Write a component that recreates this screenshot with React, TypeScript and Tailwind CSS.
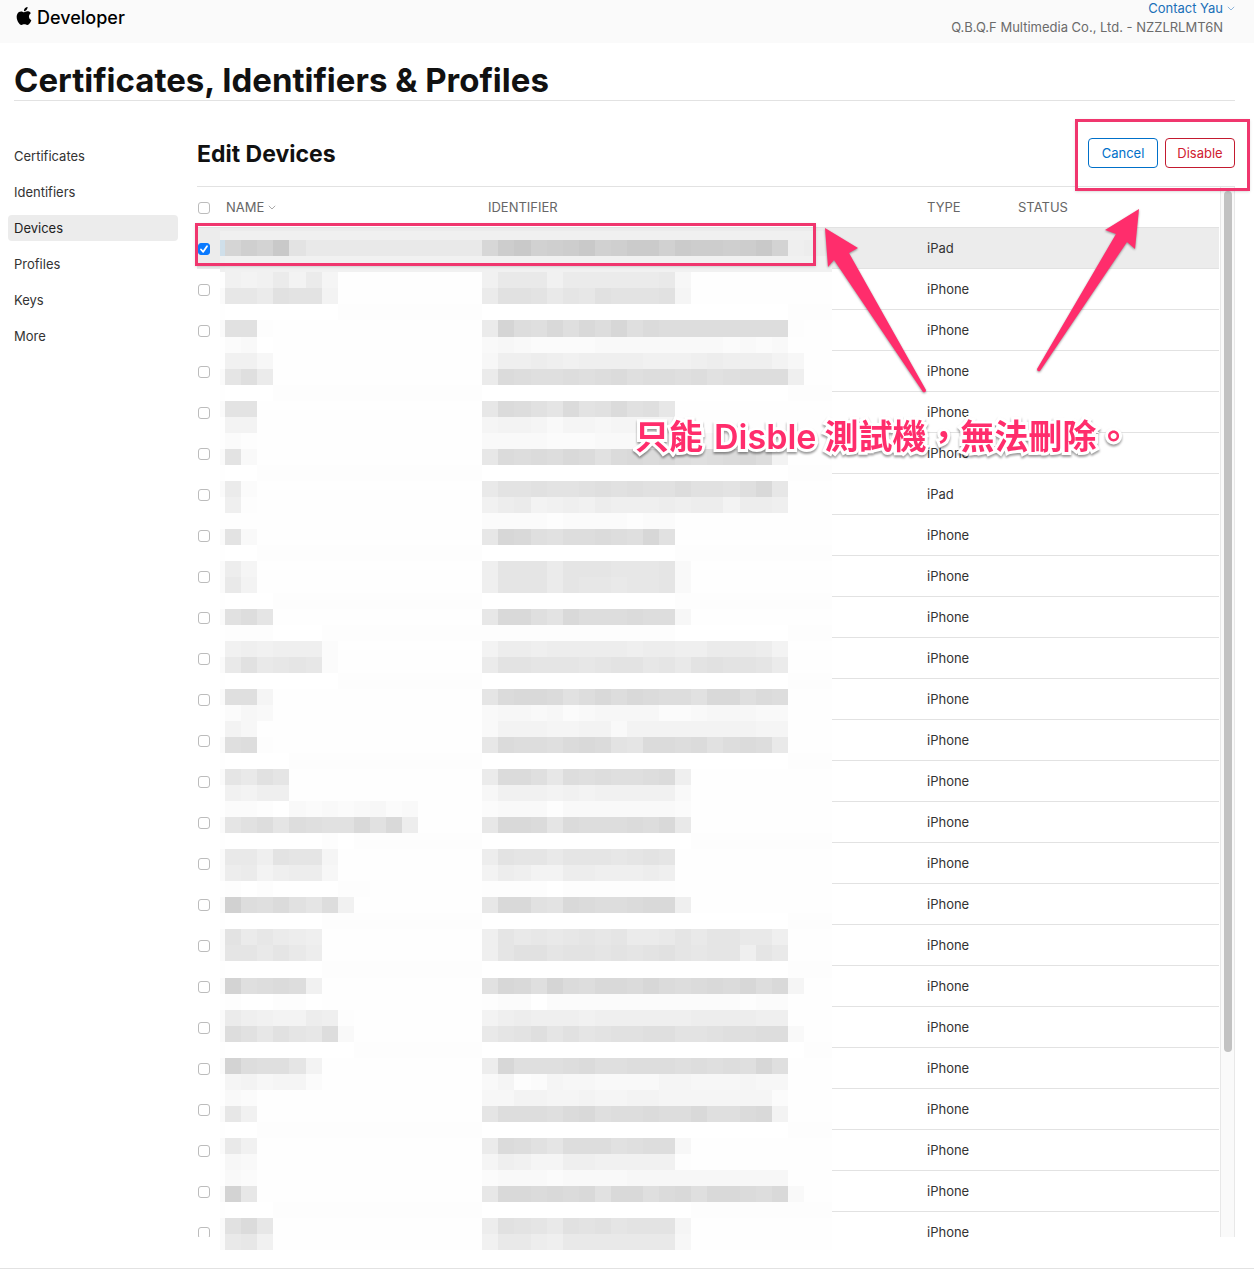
import { useState } from "react";
import { SiApple } from "react-icons/si";

/* Redaction mosaic: one entry per band of blocks, [name column, identifier column].
   Each base-36 digit is how dark a block is, in steps of two grey levels. */
const MOSAIC: [string, string][] = [
  ["lomrebbbbbbbbbbb", "kprnoprnoqqnqppoprm89a"],
  ["7777777777777777", "7777777777777777777777"],
  ["767a6a5", "7bbb7aaaaaab4"],
  ["ccafee6", "affebdcfeeef5"],
  ["0000000111111111", "0000000000000000000111"],
  ["ff1", "alhgjgjhkgihhhhhhhh1"],
  ["230", "3432222333333332323"],
  ["774", "48898788887778988864"],
  ["dga", "aihgghghighhghfghhh8"],
  ["0001111111111111", "0000000000000000000111"],
  ["ee", "cihfdiefifgc"],
  ["66", "566535545555"],
  ["21", "3333222333333333333"],
  ["e3", "cihihjifijijhghijh6"],
  ["0011111111111111", "0000000000000000000111"],
  ["a2", "beefeefgfgffhffegjc"],
  ["81", "79a6787988898996998"],
  ["", "222212222122"],
  ["e3", "ckjgfhhihgkf"],
  ["0011111111111111", "0000000000001111111111"],
  ["95", "8dddadddcccd3"],
  ["b6", "8dddadccbccd3"],
  ["0001111111111111", "0000000000001111111111"],
  ["fhd", "cjjgejhhhihh4"],
  ["1110001111111111", "1111111111110000000111"],
  ["7878882", "69989999989988aaa96"],
  ["bfbcdc2", "aeedddcdeecdbefeeda"],
  ["0000000111111111", "0000000000000000000111"],
  ["gg5", "dijjifhjhjihhfjjgih"],
  ["243", "3443423444422344433"],
  ["64", "3666556636666666655"],
  ["gh1", "cihhgijiediihifhihb"],
  ["0000111111111111", "0000000000000000000111"],
  ["dbfd", "aiigchghgghi8"],
  ["7688", "4777676777773"],
  ["221032323423", "2333133333332"],
  ["dfhdhgffjfj9", "cjjidihhhihjb"],
  ["0000001011111111", "0000000000000111111111"],
  ["bb8edd5", "9eddbdddcded"],
  ["9a68994", "698669988898"],
  ["101000011", "111101111111"],
  ["nhgifdh7", "cjjfejihhijj8"],
  ["0000001111111111", "0000000000000000000111"],
  ["eaca98", "8dbcbcdcdaabdbddbb8"],
  ["ddbdb9", "8dffdeededefdcdd8db"],
  ["0000001111111111", "0000000000000000000111"],
  ["mghih7", "fkjglihjjikihijikhj5"],
  ["100110", "1220222222222222122"],
  ["a8766981", "6898887888888999988"],
  ["hfcfdch3", "bdegdfdeffggeefgghh3"],
  ["0000000011111111", "0000000000000000000011"],
  ["mhggd6", "9kggghigghhhghghgkg"],
  ["564552", "3512544333355444544"],
  ["32", "4466556556655555552"],
  ["c7", "dhhhgijghhihhjggij6"],
  ["0011111111111111", "0000000000000000000111"],
  ["b7", "aihfdhhhfghh4"],
  ["43", "5875588777771"],
  ["32", "2333233334444444444"],
  ["mc", "cjjijijfjjgijgjjihj3"],
  ["0001111111111111", "0000000000000111111111"],
  ["fic", "9fedbfefdeee5"],
  ["bc7", "7bb98bbbbbbb4"],
];

const blockX = (i: number) => 5 + 16 * i + (i >= 5 ? 1 : 0) + (i >= 19 ? 1 : 0) + (i >= 32 ? 1 : 0);
const blockY = (j: number) => 9 + 16 * j + (j >= 6 ? 1 : 0) + (j >= 46 ? 1 : 0);

function Mosaic() {
  const blocks: { x: number; y: number; w: number; h: number; g: number }[] = [];
  MOSAIC.forEach(([name, id], j) => {
    const y = blockY(j);
    const h = blockY(j + 1) - y;
    const add = (digits: string, start: number) =>
      digits.split("").forEach((d, k) => {
        const x = blockX(start + k);
        const end = start + k === 37 ? 612 : blockX(start + k + 1);
        blocks.push({ x, y, w: end - x, h, g: 255 - 2 * parseInt(d, 36) });
      });
    add(name, 0);
    add(id, 16);
    if (j > 1 && name > "9") blocks.push({ x: 0, y, w: 5, h, g: 250 });
  });
  return (
    <svg
      className="pointer-events-none absolute top-[44px] left-[23px]"
      width="612"
      height="1019"
      shapeRendering="crispEdges"
      aria-hidden="true"
    >
      <rect width="612" height="1019" fill="#fefefe" />
      <rect width="612" height="41" fill="#f0f0f0" />
      <rect x="0" y="9" width="5" height="16" fill="#cfdfea" />
      {blocks.map((b, n) => (
        <rect key={n} x={b.x} y={b.y} width={b.w} height={b.h} fill={`rgb(${b.g},${b.g},${b.g})`} />
      ))}
    </svg>
  );
}

function Checkbox({ label, initial = false }: { label: string; initial?: boolean }) {
  const [on, setOn] = useState(initial);
  return (
    <span className="relative block size-3">
      <input
        type="checkbox"
        aria-label={label}
        checked={on}
        onChange={() => setOn(!on)}
        className="peer block size-3 appearance-none rounded-[3px] border border-[#bcbcbc] bg-white checked:border-[#0a7aff] checked:bg-[#0a7aff]"
      />
      <svg viewBox="0 0 12 12" className="pointer-events-none absolute inset-0 hidden size-3 peer-checked:block" fill="none" stroke="white" strokeWidth="1.8" strokeLinecap="round" strokeLinejoin="round">
        <path d="M3 6.5 5.2 8.8 9 3.2" />
      </svg>
    </span>
  );
}

function Chevron() {
  return (
    <svg width="8" height="5" viewBox="0 0 8 5" fill="none" stroke="currentColor" strokeWidth="1" aria-hidden="true">
      <path d="M.8.8 4 4 7.2.8" />
    </svg>
  );
}

const NAV = ["Certificates", "Identifiers", "Devices", "Profiles", "Keys", "More"];
const TYPES = Array.from({ length: 25 }, (_, i) => (i === 0 || i === 6 ? "iPad" : "iPhone"));

export default function App() {
  return (
    <div className="relative overflow-hidden bg-white font-['Inter','Noto_Sans_CJK_TC',sans-serif] text-[13px] leading-5 text-[#333]">
      <header className="flex h-[43px] justify-between bg-[#fafafa] pr-[19px] pl-[15px]">
        <a href="#" className="flex h-[35px] items-center gap-1 text-[18px] font-medium text-black">
          <SiApple className="mb-1 size-[18px]" />
          Developer
        </a>
        <div className="flex flex-col items-end">
          <button type="button" className="flex h-[15px] items-center gap-1 text-[#1a70b8]">
            Contact Yau
            <span className="pt-px text-[#8fb5da]"><Chevron /></span>
          </button>
          <p className="mt-[2px] mr-3 text-[#6b6b6b]">Q.B.Q.F Multimedia Co., Ltd. - NZZLRLMT6N</p>
        </div>
      </header>

      <h1 className="mr-[19px] ml-[14px] border-b border-[#e2e2e2] pt-[18px] text-[33px] leading-[39px] font-bold text-[#111]">
        Certificates, Identifiers &amp; Profiles
      </h1>

      <div className="flex pr-[19px] pl-2">
        <nav className="mt-[42px] flex w-[170px] shrink-0 flex-col gap-[10px]">
          {NAV.map((n) => (
            <a
              key={n}
              href="#"
              aria-current={n === "Devices" ? "page" : undefined}
              className={n === "Devices" ? "rounded-[4px] bg-[#ececec] px-[6px] py-[3px] text-[#222]" : "px-[6px] py-[3px]"}
            >
              {n}
            </a>
          ))}
        </nav>

        <main className="relative ml-[19px] min-w-0 flex-1">
          <div className="flex h-[85px] items-start justify-between pt-[37px]">
            <h2 className="text-[23px] leading-8 font-bold text-[#111]">Edit Devices</h2>
            <div className="flex gap-[7px]">
              <button type="button" className="h-[30px] w-[70px] rounded-[4px] border border-[#0070c9] text-[#0070c9]">Cancel</button>
              <button type="button" className="h-[30px] w-[70px] rounded-[4px] border border-[#c31a2f] text-[#d0202f]">Disable</button>
            </div>
          </div>

          <div className="relative flex h-[1051px] border-t border-[#e2e2e2]">
            <div className="min-w-0 flex-1 overflow-hidden">
              <table className="w-full table-fixed border-separate border-spacing-0 text-left">
                <thead>
                  <tr className="h-[41px] text-[#666]">
                    <th className="w-[29px] border-b border-[#e2e2e2] pt-px pl-px font-normal"><Checkbox label="Select all devices" /></th>
                    <th className="w-[262px] border-b border-[#e2e2e2] font-normal">
                      <button type="button" className="flex items-center gap-1">
                        NAME
                        <span className="pt-px text-[#aaa]"><Chevron /></span>
                      </button>
                    </th>
                    <th className="w-[439px] border-b border-[#e2e2e2] font-normal">IDENTIFIER</th>
                    <th className="w-[91px] border-b border-[#e2e2e2] font-normal">TYPE</th>
                    <th className="border-b border-[#e2e2e2] font-normal">STATUS</th>
                  </tr>
                </thead>
                <tbody>
                  {TYPES.map((t, i) => (
                    <tr key={i} className={i === 0 ? "h-[41px] bg-[#ececec]" : "h-[41px]"}>
                      <td className="pt-px pl-px"><Checkbox label={`Select device ${i + 1}`} initial={i === 0} /></td>
                      <td />
                      <td className="border-b border-[#e2e2e2]" />
                      <td className="border-b border-[#e2e2e2]">{t}</td>
                      <td className="border-b border-[#e2e2e2]" />
                    </tr>
                  ))}
                </tbody>
              </table>
            </div>
            <div className="ml-px w-[15px] border-x border-[#e8e8e8] bg-[#fafafa] pt-1 pl-[3px]">
              <div className="h-[861px] w-2 rounded-full bg-[#c2c2c2]" />
            </div>
            <Mosaic />
          </div>
        </main>
      </div>

      <div className="mt-[31px] h-[14px] border-t border-[#e2e2e2]" />

      <div className="pointer-events-none absolute top-[223px] left-[195px] h-[43px] w-[621px] border-[3px] border-[#f0366e] shadow-sm" />
      <div className="pointer-events-none absolute top-[119px] right-[4px] h-[72px] w-[175px] border-[3px] border-[#f0366e] shadow-sm" />
      <svg className="pointer-events-none absolute top-[200px] left-[810px] drop-shadow-[0_1px_1px_rgba(0,0,0,0.4)]" width="340" height="200" fill="#ff2d6c" aria-hidden="true">
        <path d="M15 28 48 48 39 53 116 190Q116 193 113 192L24 60 18 67Z" />
        <path d="M329 9 295 30 306 34 227 169Q227 172 230 171L317 42 325 49Z" />
      </svg>
      <p className="pointer-events-none absolute top-[415px] left-[635px] text-[34px] leading-[44px] font-bold whitespace-nowrap text-[#ff2d6c] drop-shadow-[0_2px_1px_rgba(0,0,0,0.4)] [-webkit-text-stroke:6px_white] [paint-order:stroke_fill]">
        只能 <span className="ml-[3px] font-semibold">Disble</span> 測試機，無法刪除。
      </p>
    </div>
  );
}
